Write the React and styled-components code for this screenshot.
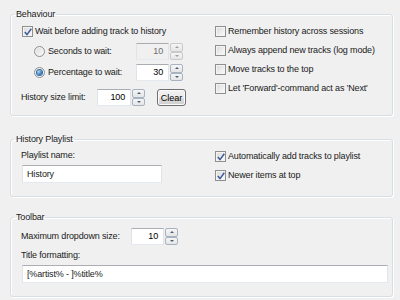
import React from "react";
import styled, { createGlobalStyle } from "styled-components";

const GlobalStyle = createGlobalStyle`
    body {
        margin: 0;
        background: #f0f0f0;
        font-family: "Liberation Sans", Arial, sans-serif;
        font-size: 9px;
        letter-spacing: -0.15px;
        color: #1a1a1a;
    }
`

const Page = styled.div`
    width: 400px;
    height: 300px;
    box-sizing: border-box;
    padding: 8px 7px 0 10px;
    display: flex;
    flex-direction: column;
`

const Group = styled.fieldset`
    margin: 0 0 ${p => p.$gap || 0}px 0;
    padding: ${p => p.$pad || "4px 4px 9px 10px"};
    border: 1px solid #d5dfe5;
    border-radius: 3px;
    box-shadow: inset 1px 1px 0 #fff, 1px 1px 0 #fff;
    min-width: 0;
`

const Legend = styled.legend`
    margin-left: -7px;
    padding: 0 1px 0 2px;
    line-height: 13px;
`

const Columns = styled.div`
    display: grid;
    grid-template-columns: 193px 1fr;
`

const Column = styled.div`
    display: flex;
    flex-direction: column;
    align-items: flex-start;
`

const Row = styled.div`
    display: flex;
    align-items: center;
    height: ${p => p.$h || 13}px;
    margin-top: ${p => p.$mt || 0}px;
    padding-left: ${p => p.$indent || 0}px;
    white-space: nowrap;
`

const Label = styled.span`
    line-height: 13px;
    width: ${p => (p.$w ? p.$w + "px" : "auto")};
    flex-shrink: 0;
`

const Box = styled.span`
    width: 11px;
    height: 11px;
    box-sizing: border-box;
    border: 1px solid #8e8f8f;
    background: linear-gradient(135deg, #d8d8d8 0%, #f0f0f0 65%, #fbfbfb 100%);
    box-shadow: inset 0 0 0 1px #f4f4f4;
    display: flex;
    align-items: center;
    justify-content: center;
    margin: 0 2px 0 1px;
    flex-shrink: 0;
`

const Radio = styled(Box)`
    border-radius: 50%;
    margin-right: 3px;
`

const Dot = styled.span`
    width: 5px;
    height: 5px;
    border-radius: 50%;
    background: radial-gradient(circle at 35% 35%, #b8d9f5, #1e6fb8 70%, #174f86);
    box-shadow: 0 0 0 1px #3a6da0;
`

const Spin = styled.div`
    display: flex;
    align-items: stretch;
    height: 17px;
`

const Field = styled.div`
    width: ${p => p.$w || 33}px;
    box-sizing: border-box;
    border: 1px solid #e2e3ea;
    border-top-color: #abadb3;
    border-bottom-color: #e3e9ef;
    background: ${p => (p.$disabled ? "#f0f0f0" : "#fff")};
    color: ${p => (p.$disabled ? "#6d6d6d" : "#000")};
    text-align: right;
    padding-right: 5px;
    line-height: 15px;
`

const Arrows = styled.div`
    display: flex;
    flex-direction: column;
    margin-left: 1px;
    width: 13px;
`

const Arrow = styled.span`
    flex: 1;
    box-sizing: border-box;
    border: 1px solid ${p => (p.$disabled ? "#c9c9c9" : "#a8b3c2")};
    border-radius: 2px;
    background: linear-gradient(#f6f6f6, #e5e5e5);
    display: flex;
    align-items: center;
    justify-content: center;
    &::after {
        content: "";
        border-left: 2px solid transparent;
        border-right: 2px solid transparent;
        ${p => (p.$down ? "border-top" : "border-bottom")}: 2px solid ${p => (p.$disabled ? "#a0a0a0" : "#4c607a")};
    }
`

const Button = styled.button`
    margin-left: 12px;
    height: 17px;
    width: 29px;
    padding: 0;
    font: inherit;
    color: #000;
    border: 1px solid #707070;
    border-radius: 3px;
    background: linear-gradient(#f2f2f2 0%, #ebebeb 50%, #dddddd 51%, #cfcfcf 100%);
    box-shadow: inset 0 0 0 1px #fbfbfb;
`

const TextInput = styled.div`
    box-sizing: border-box;
    height: 18px;
    width: ${p => (p.$w ? p.$w + "px" : "100%")};
    margin-left: 1px;
    border: 1px solid #e2e3ea;
    border-top-color: #abadb3;
    border-bottom-color: #e3e9ef;
    background: #fff;
    padding-left: 4px;
    line-height: 16px;
`

function Check({ checked, children }) {
    return (
        <>
            <Box>
                {checked && (
                    <svg width="8" height="8" viewBox="0 0 8 8">
                        <path d="M0.8 4 L3 6.6 L7.3 0.8" fill="none" stroke="#3d5a98" strokeWidth="1.5" />
                    </svg>
                )}
            </Box>
            <Label>{children}</Label>
        </>
    )
}

function SpinBox({ value, disabled, w }) {
    return (
        <Spin>
            <Field $w={w} $disabled={disabled}>{value}</Field>
            <Arrows>
                <Arrow $disabled={disabled} />
                <Arrow $down $disabled={disabled} />
            </Arrows>
        </Spin>
    )
}

export default function App() {
    return (
        <>
            <GlobalStyle />
            <Page>
                <Group $gap={17}>
                    <Legend>Behaviour</Legend>
                    <Columns>
                        <Column>
                            <Row><Check checked>Wait before adding track to history</Check></Row>
                            <Row $h={17} $mt={5} $indent={12}>
                                <Radio />
                                <Label $w={88}>Seconds to wait:</Label>
                                <SpinBox value="10" disabled />
                            </Row>
                            <Row $h={17} $mt={4} $indent={12}>
                                <Radio><Dot /></Radio>
                                <Label $w={88}>Percentage to wait:</Label>
                                <SpinBox value="30" />
                            </Row>
                            <Row $h={17} $mt={8}>
                                <Label $w={76}>History size limit:</Label>
                                <SpinBox value="100" w={34} />
                                <Button>Clear</Button>
                            </Row>
                        </Column>
                        <Column>
                            <Row><Check>Remember history across sessions</Check></Row>
                            <Row $mt={6}><Check>Always append new tracks (log mode)</Check></Row>
                            <Row $mt={6}><Check>Move tracks to the top</Check></Row>
                            <Row $mt={6}><Check>Let 'Forward'-command act as 'Next'</Check></Row>
                        </Column>
                    </Columns>
                </Group>
                <Group $gap={14} $pad="3px 4px 13px 10px">
                    <Legend>History Playlist</Legend>
                    <Columns>
                        <Column>
                            <Row><Label>Playlist name:</Label></Row>
                            <Row $h={18} $mt={3}><TextInput $w={140}>History</TextInput></Row>
                        </Column>
                        <Column>
                            <Row $mt={1}><Check checked>Automatically add tracks to playlist</Check></Row>
                            <Row $mt={6}><Check checked>Newer items at top</Check></Row>
                        </Column>
                    </Columns>
                </Group>
                <Group $pad="4px 4px 13px 10px">
                    <Legend>Toolbar</Legend>
                    <Column>
                        <Row $h={17}>
                            <Label $w={110}>Maximum dropdown size:</Label>
                            <SpinBox value="10" />
                        </Row>
                        <Row $mt={4}><Label>Title formatting:</Label></Row>
                    </Column>
                    <Row $h={18} $mt={3}><TextInput>[%artist% - ]%title%</TextInput></Row>
                </Group>
            </Page>
        </>
    )
}
